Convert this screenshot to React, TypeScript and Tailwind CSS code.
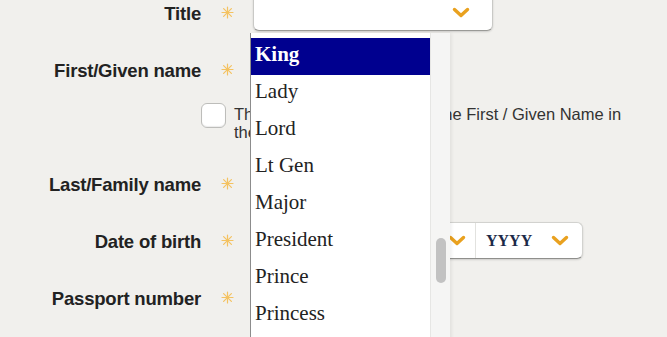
import React from 'react';

const titles = ['King', 'Lady', 'Lord', 'Lt Gen', 'Major', 'President', 'Prince', 'Princess', 'Professor'];

const Required = () => (
  <svg width="13" height="13" viewBox="0 0 13 13" className="text-[#f4c261]">
    <g stroke="currentColor" strokeWidth="1.2" strokeLinecap="round">
      <line x1="6.5" y1="1" x2="6.5" y2="12" />
      <line x1="1" y1="6.5" x2="12" y2="6.5" />
      <line x1="2.6" y1="2.6" x2="10.4" y2="10.4" />
      <line x1="10.4" y1="2.6" x2="2.6" y2="10.4" />
    </g>
  </svg>
);

const Chevron = () => (
  <svg width="18" height="11" viewBox="0 0 18 11">
    <polyline points="2.5,2.5 9,8.5 15.5,2.5" fill="none" stroke="#e9a11f" strokeWidth="3.4" strokeLinecap="round" strokeLinejoin="round" />
  </svg>
);

interface RowProps {
  label: string;
  className?: string;
  children?: React.ReactNode;
}

const Row: React.FC<RowProps> = ({ label, className, children }) => (
  <div className={`flex items-center h-[37px] ${className || ''}`}>
    <label className="w-[201px] shrink-0 text-right text-[18.5px] font-bold text-[#222] tracking-[-0.2px] pt-[2px]">{label}</label>
    <span className="w-[52px] shrink-0 flex justify-center">
      <Required />
    </span>
    {children}
  </div>
);

export default function App() {
  return (
    <div className="relative w-[667px] h-[337px] overflow-hidden bg-[#f1f0ed] font-['Liberation_Sans',Arial,sans-serif]">
      <div className="flex flex-col -mt-[6px]">
        <Row label="Title">
          <div className="w-[240px] h-[37px] bg-white rounded-b-[6px] border border-t-0 border-[#c9c9c6] border-b-[#9a9a97] shadow-[0_1px_2px_rgba(0,0,0,0.15)] flex items-center justify-end pr-[22px]">
            <Chevron />
          </div>
        </Row>

        <Row label="First/Given name" className="mt-[20px]" />

        <div className="flex mt-[15px] h-[37px]">
          <div className="w-[201px] shrink-0" />
          <span className="w-[25px] h-[25px] shrink-0 bg-white rounded-[6px] border border-[#bdbdba] shadow-[inset_0_-1px_1px_rgba(0,0,0,0.08)]" />
          <p className="ml-[8px] w-[400px] text-[16.5px] leading-[18px] text-[#333] mt-[2px]">
            <span className="[word-spacing:-0.9px]">The passport does not have th</span>e First / Given Name in the surname field
          </p>
        </div>

        <Row label="Last/Family name" className="mt-[25px]" />

        <Row label="Date of birth" className="mt-[20px]">
          <div className="w-[330px] h-[37px] bg-white rounded-[6px] border border-[#d2d2cf] border-b-[#8f8f8c] shadow-[0_1px_2px_rgba(0,0,0,0.15)] flex font-['Liberation_Serif',serif] font-bold text-[16px] text-[#1c2a48]">
            <div className="flex-1 flex items-center justify-between pl-[10px] pr-[9px] border-r border-[#e2e2df]">
              <span>DD</span>
              <Chevron />
            </div>
            <div className="flex-1 flex items-center justify-between pl-[10px] pr-[9px] border-r border-[#e2e2df]">
              <span>MM</span>
              <Chevron />
            </div>
            <div className="w-[106px] flex items-center justify-between pl-[10px] pr-[13px]">
              <span>YYYY</span>
              <Chevron />
            </div>
          </div>
        </Row>

        <Row label="Passport number" className="mt-[20px]" />
      </div>

      {/* open title list */}
      <div className="absolute left-[250px] top-[33px] w-[200px] h-[330px] flex bg-white border-l border-[#8c8c8c] shadow-[2px_0_3px_rgba(0,0,0,0.06)]">
        <ul className="flex-1 pt-[5px] font-['Liberation_Serif',serif] text-[21px] text-[#222]">
          {titles.map((t, i) => (
            <li
              key={t}
              className={`h-[37px] flex items-center pl-[4px] pb-[4px] ${i === 0 ? 'bg-[#00008f] text-white font-bold' : ''}`}
            >
              {t}
            </li>
          ))}
        </ul>
        <div className="w-[20px] bg-[#f5f5f4] border-l border-[#e6e6e4] pt-[205px] flex justify-center">
          <div className="w-[10px] h-[45px] rounded-full bg-[#c2c2c2]" />
        </div>
      </div>
    </div>
  );
}
